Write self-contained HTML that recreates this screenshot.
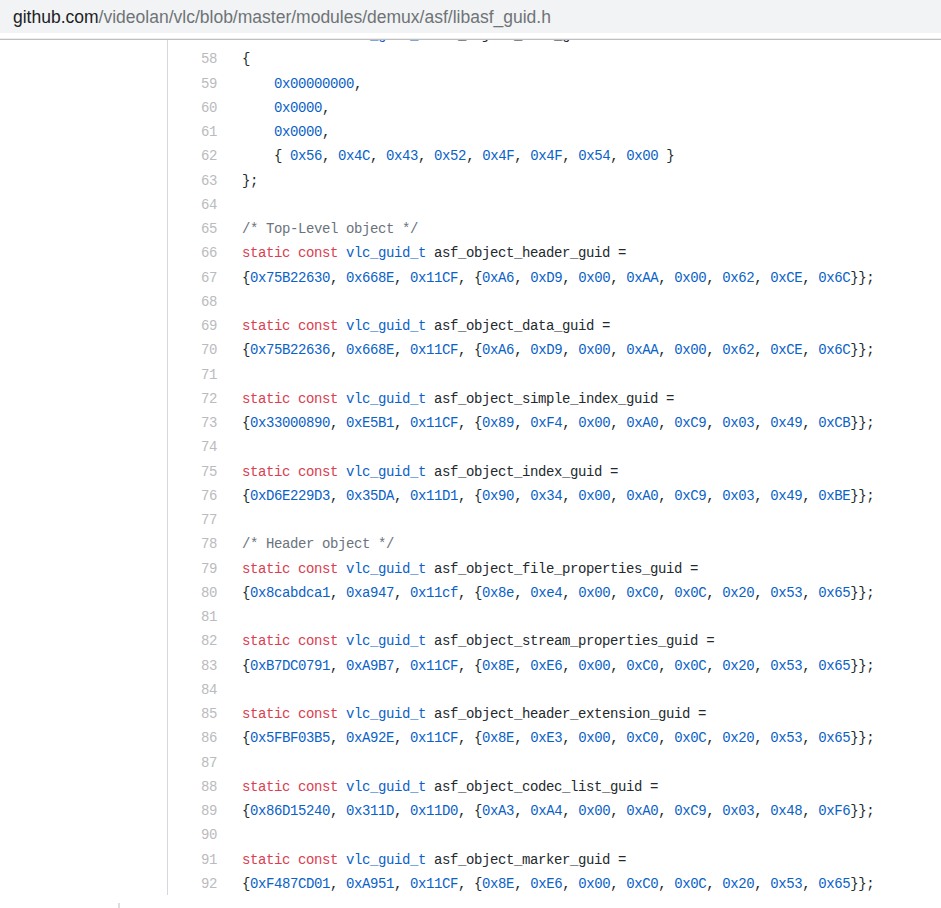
<!DOCTYPE html>
<html><head><meta charset="utf-8">
<style>
html,body{margin:0;padding:0;background:#fff;width:941px;height:908px;overflow:hidden;position:relative}
#bar{position:absolute;left:0;top:0;width:941px;height:33px;background:#f1f3f4;font-family:"Liberation Sans",sans-serif;font-size:17.5px;color:#6f7377;white-space:nowrap}
#bar span.u{position:absolute;left:13px;top:7px}
#bar b{font-weight:normal;color:#202124}
#sep{position:absolute;left:0;top:39px;width:941px;height:1px;background:#bfbec1;box-shadow:0 -1px 0 #ededed}
#code{position:absolute;left:0;top:40px;width:941px;height:868px;overflow:hidden}
#vl{position:absolute;left:167px;top:40px;width:1px;height:855px;background:#d5d8dd}
#vl2{position:absolute;left:118px;top:903px;width:2px;height:5px;background:#dcdee1}
#lines{position:absolute;left:0;top:-17px;font-family:"Liberation Mono",monospace;font-size:14px;letter-spacing:-0.4px;line-height:24.26px;}
.r{height:24.26px;position:relative}
.n{position:absolute;width:40px;text-align:right;color:#babbbd}
.n{left:177px}
.t{position:absolute;left:242px;color:#24292e;white-space:pre}
i{font-style:normal}
.k{color:#d9404f}
.b{color:#0a62c8}
.c{color:#6a737d}
</style></head><body>
<div id="code"><div id="lines">
<div class="r"><span class="n">57</span><span class="t"><i class="k">static</i> <i class="k">const</i> <i class="b">vlc_guid_t</i> asf_object_null_guid =</span></div><div class="r"><span class="n">58</span><span class="t">{</span></div><div class="r"><span class="n">59</span><span class="t">    <i class="b">0x00000000</i>,</span></div><div class="r"><span class="n">60</span><span class="t">    <i class="b">0x0000</i>,</span></div><div class="r"><span class="n">61</span><span class="t">    <i class="b">0x0000</i>,</span></div><div class="r"><span class="n">62</span><span class="t">    { <i class="b">0x56</i>, <i class="b">0x4C</i>, <i class="b">0x43</i>, <i class="b">0x52</i>, <i class="b">0x4F</i>, <i class="b">0x4F</i>, <i class="b">0x54</i>, <i class="b">0x00</i> }</span></div><div class="r"><span class="n">63</span><span class="t">};</span></div><div class="r"><span class="n">64</span><span class="t"></span></div><div class="r"><span class="n">65</span><span class="t"><i class="c">/* Top-Level object */</i></span></div><div class="r"><span class="n">66</span><span class="t"><i class="k">static</i> <i class="k">const</i> <i class="b">vlc_guid_t</i> asf_object_header_guid =</span></div><div class="r"><span class="n">67</span><span class="t">{<i class="b">0x75B22630</i>, <i class="b">0x668E</i>, <i class="b">0x11CF</i>, {<i class="b">0xA6</i>, <i class="b">0xD9</i>, <i class="b">0x00</i>, <i class="b">0xAA</i>, <i class="b">0x00</i>, <i class="b">0x62</i>, <i class="b">0xCE</i>, <i class="b">0x6C</i>}};</span></div><div class="r"><span class="n">68</span><span class="t"></span></div><div class="r"><span class="n">69</span><span class="t"><i class="k">static</i> <i class="k">const</i> <i class="b">vlc_guid_t</i> asf_object_data_guid =</span></div><div class="r"><span class="n">70</span><span class="t">{<i class="b">0x75B22636</i>, <i class="b">0x668E</i>, <i class="b">0x11CF</i>, {<i class="b">0xA6</i>, <i class="b">0xD9</i>, <i class="b">0x00</i>, <i class="b">0xAA</i>, <i class="b">0x00</i>, <i class="b">0x62</i>, <i class="b">0xCE</i>, <i class="b">0x6C</i>}};</span></div><div class="r"><span class="n">71</span><span class="t"></span></div><div class="r"><span class="n">72</span><span class="t"><i class="k">static</i> <i class="k">const</i> <i class="b">vlc_guid_t</i> asf_object_simple_index_guid =</span></div><div class="r"><span class="n">73</span><span class="t">{<i class="b">0x33000890</i>, <i class="b">0xE5B1</i>, <i class="b">0x11CF</i>, {<i class="b">0x89</i>, <i class="b">0xF4</i>, <i class="b">0x00</i>, <i class="b">0xA0</i>, <i class="b">0xC9</i>, <i class="b">0x03</i>, <i class="b">0x49</i>, <i class="b">0xCB</i>}};</span></div><div class="r"><span class="n">74</span><span class="t"></span></div><div class="r"><span class="n">75</span><span class="t"><i class="k">static</i> <i class="k">const</i> <i class="b">vlc_guid_t</i> asf_object_index_guid =</span></div><div class="r"><span class="n">76</span><span class="t">{<i class="b">0xD6E229D3</i>, <i class="b">0x35DA</i>, <i class="b">0x11D1</i>, {<i class="b">0x90</i>, <i class="b">0x34</i>, <i class="b">0x00</i>, <i class="b">0xA0</i>, <i class="b">0xC9</i>, <i class="b">0x03</i>, <i class="b">0x49</i>, <i class="b">0xBE</i>}};</span></div><div class="r"><span class="n">77</span><span class="t"></span></div><div class="r"><span class="n">78</span><span class="t"><i class="c">/* Header object */</i></span></div><div class="r"><span class="n">79</span><span class="t"><i class="k">static</i> <i class="k">const</i> <i class="b">vlc_guid_t</i> asf_object_file_properties_guid =</span></div><div class="r"><span class="n">80</span><span class="t">{<i class="b">0x8cabdca1</i>, <i class="b">0xa947</i>, <i class="b">0x11cf</i>, {<i class="b">0x8e</i>, <i class="b">0xe4</i>, <i class="b">0x00</i>, <i class="b">0xC0</i>, <i class="b">0x0C</i>, <i class="b">0x20</i>, <i class="b">0x53</i>, <i class="b">0x65</i>}};</span></div><div class="r"><span class="n">81</span><span class="t"></span></div><div class="r"><span class="n">82</span><span class="t"><i class="k">static</i> <i class="k">const</i> <i class="b">vlc_guid_t</i> asf_object_stream_properties_guid =</span></div><div class="r"><span class="n">83</span><span class="t">{<i class="b">0xB7DC0791</i>, <i class="b">0xA9B7</i>, <i class="b">0x11CF</i>, {<i class="b">0x8E</i>, <i class="b">0xE6</i>, <i class="b">0x00</i>, <i class="b">0xC0</i>, <i class="b">0x0C</i>, <i class="b">0x20</i>, <i class="b">0x53</i>, <i class="b">0x65</i>}};</span></div><div class="r"><span class="n">84</span><span class="t"></span></div><div class="r"><span class="n">85</span><span class="t"><i class="k">static</i> <i class="k">const</i> <i class="b">vlc_guid_t</i> asf_object_header_extension_guid =</span></div><div class="r"><span class="n">86</span><span class="t">{<i class="b">0x5FBF03B5</i>, <i class="b">0xA92E</i>, <i class="b">0x11CF</i>, {<i class="b">0x8E</i>, <i class="b">0xE3</i>, <i class="b">0x00</i>, <i class="b">0xC0</i>, <i class="b">0x0C</i>, <i class="b">0x20</i>, <i class="b">0x53</i>, <i class="b">0x65</i>}};</span></div><div class="r"><span class="n">87</span><span class="t"></span></div><div class="r"><span class="n">88</span><span class="t"><i class="k">static</i> <i class="k">const</i> <i class="b">vlc_guid_t</i> asf_object_codec_list_guid =</span></div><div class="r"><span class="n">89</span><span class="t">{<i class="b">0x86D15240</i>, <i class="b">0x311D</i>, <i class="b">0x11D0</i>, {<i class="b">0xA3</i>, <i class="b">0xA4</i>, <i class="b">0x00</i>, <i class="b">0xA0</i>, <i class="b">0xC9</i>, <i class="b">0x03</i>, <i class="b">0x48</i>, <i class="b">0xF6</i>}};</span></div><div class="r"><span class="n">90</span><span class="t"></span></div><div class="r"><span class="n">91</span><span class="t"><i class="k">static</i> <i class="k">const</i> <i class="b">vlc_guid_t</i> asf_object_marker_guid =</span></div><div class="r"><span class="n">92</span><span class="t">{<i class="b">0xF487CD01</i>, <i class="b">0xA951</i>, <i class="b">0x11CF</i>, {<i class="b">0x8E</i>, <i class="b">0xE6</i>, <i class="b">0x00</i>, <i class="b">0xC0</i>, <i class="b">0x0C</i>, <i class="b">0x20</i>, <i class="b">0x53</i>, <i class="b">0x65</i>}};</span></div>
</div></div>
<div id="bar"><span class="u"><b>github.com</b>/videolan/vlc/blob/master/modules/demux/asf/libasf_guid.h</span></div>
<div id="sep"></div>
<div id="vl"></div>
<div id="vl2"></div>
</body></html>
